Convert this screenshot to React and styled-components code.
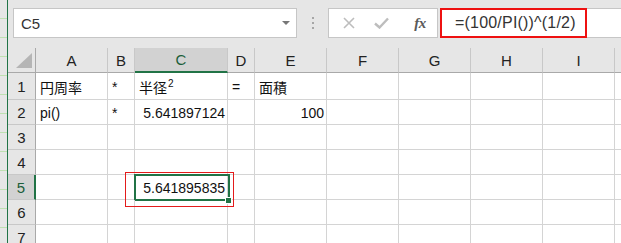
import React from 'react';
import styled, { createGlobalStyle } from 'styled-components';

const GlobalStyle = createGlobalStyle`
  html, body {
    margin: 0;
    padding: 0;
    background: #fff;
    overflow: hidden;
  }
  body {
    font-family: "Liberation Sans", "Noto Sans CJK JP", sans-serif;
  }
`;

const COLS = '28px 72px 27px 93px 27px 72px 72px 72px 72px 72px 72px';
const GREEN = '#217346';

const Window = styled.div`
  display: flex;
  width: 621px;
  height: 243px;
  overflow: hidden;
`;

const EdgeStrip = styled.div`
  flex: none;
  width: 7px;
  background: repeating-linear-gradient(
      to bottom,
      transparent 0 18px,
      #bfe0b2 18px 19px
    ),
    #e6e6e6;
  border-right: 1px solid ${GREEN};
`;

const Main = styled.div`
  flex: 1;
  min-width: 0;
  display: flex;
  flex-direction: column;
`;

const Toolbar = styled.div`
  flex: none;
  height: 48px;
  box-sizing: border-box;
  padding: 8px 0 0 5px;
  background: #e6e6e6;
  display: flex;
  align-items: flex-start;
`;

const NameBox = styled.div`
  width: 284px;
  height: 30px;
  box-sizing: border-box;
  background: #fff;
  border: 1px solid #c6c6c6;
  display: flex;
  align-items: center;
  justify-content: space-between;
  padding: 0 6px 0 7px;
  font-size: 15px;
  color: #333;
`;

const DropArrow = styled.span`
  width: 0;
  height: 0;
  border-left: 4px solid transparent;
  border-right: 4px solid transparent;
  border-top: 4px solid #777;
`;

const Grip = styled.div`
  width: 31px;
  height: 30px;
  display: flex;
  flex-direction: column;
  align-items: center;
  justify-content: center;
  gap: 3px;
`;

const GripDot = styled.span`
  width: 2px;
  height: 2px;
  background: #a6a6a6;
`;

const ButtonBox = styled.div`
  width: 110px;
  height: 30px;
  box-sizing: border-box;
  background: #fff;
  border: 1px solid #c6c6c6;
  display: flex;
  align-items: center;
`;

const IconSlot = styled.span`
  display: flex;
  align-items: center;
  justify-content: center;
  margin-left: ${({ $ml }) => $ml}px;
  width: ${({ $w }) => $w}px;
  color: ${({ $active }) => ($active ? '#555' : '#bdbdbd')};
`;

const Fx = styled.span`
  font-family: "Liberation Serif", "DejaVu Serif", serif;
  font-style: italic;
  font-weight: bold;
  font-size: 15px;
  letter-spacing: -0.5px;
  color: #5a5a5a;
`;

const FormulaBox = styled.div`
  flex: 1;
  height: 30px;
  box-sizing: border-box;
  margin-left: 2px;
  background: #fff;
  border: 1px solid #c6c6c6;
  border-right: none;
  display: flex;
  align-items: flex-start;
`;

const FormulaMark = styled.div`
  width: 147px;
  height: 30px;
  box-sizing: border-box;
  margin: -1px 0 0 -1px;
  border: 2px solid #ee1111;
  padding-left: 13px;
  display: flex;
  align-items: center;
  font-size: 16px;
  letter-spacing: 0.2px;
  color: #333;
`;

const Sheet = styled.div`
  flex: 1;
  display: flex;
  flex-direction: column;
`;

const Row = styled.div`
  display: grid;
  grid-template-columns: ${COLS};
  height: ${({ $h }) => $h}px;
  flex: none;
`;

const ColHead = styled.div`
  box-sizing: border-box;
  background: ${({ $sel }) => ($sel ? '#d2d2d2' : '#e6e6e6')};
  border-right: 1px solid #c8c8c8;
  border-bottom: ${({ $sel }) => ($sel ? `2px solid ${GREEN}` : '1px solid #a9a9a9')};
  display: flex;
  align-items: center;
  justify-content: center;
  font-size: 15px;
  color: ${({ $sel }) => ($sel ? '#1c5e3a' : '#222')};
`;

const Corner = styled.div`
  box-sizing: border-box;
  background: #e6e6e6;
  border-right: 1px solid #a9a9a9;
  border-bottom: 1px solid #a9a9a9;
  display: flex;
  align-items: flex-end;
  justify-content: flex-end;
  padding: 0 3px 4px 0;
`;

const RowHead = styled.div`
  box-sizing: border-box;
  background: ${({ $sel }) => ($sel ? '#d2d2d2' : '#e6e6e6')};
  border-right: ${({ $sel }) => ($sel ? `2px solid ${GREEN}` : '1px solid #a9a9a9')};
  border-bottom: 1px solid #c8c8c8;
  display: flex;
  align-items: center;
  justify-content: center;
  padding-top: 1px;
  font-size: 15px;
  color: ${({ $sel }) => ($sel ? '#1c5e3a' : '#222')};
`;

const Cell = styled.div`
  position: relative;
  box-sizing: border-box;
  border-right: 1px solid #d4d4d4;
  border-bottom: 1px solid #d4d4d4;
  display: flex;
  align-items: center;
  justify-content: ${({ $right }) => ($right ? 'flex-end' : 'flex-start')};
  padding: 1px 2px 0 4px;
  font-size: 14px;
  color: #111;
  white-space: nowrap;

  ${({ $sel }) =>
    $sel &&
    `
    &::after {
      content: '';
      position: absolute;
      top: -1px;
      left: -1px;
      right: -3px;
      bottom: -2px;
      border: 2px solid ${GREEN};
      pointer-events: none;
    }
  `}
`;

const Sup = styled.sup`
  font-size: 10px;
  line-height: 0;
  margin-left: 1px;
  position: relative;
  top: -3px;
`;

const FillHandle = styled.span`
  position: absolute;
  right: -5px;
  bottom: -5px;
  width: 5px;
  height: 5px;
  background: ${GREEN};
  border: 1px solid #fff;
  z-index: 2;
`;

const RedMark = styled.span`
  position: absolute;
  left: -10px;
  top: -3px;
  width: 109px;
  height: 35px;
  box-sizing: border-box;
  border: 1px solid #e31b1b;
  z-index: 3;
  pointer-events: none;
`;

const letters = ['A', 'B', 'C', 'D', 'E', 'F', 'G', 'H', 'I', ''];

const rows = [
  {
    n: 1,
    h: 27,
    cells: [
      '円周率',
      '*',
      <>
        半径<Sup>2</Sup>
      </>,
      '=',
      '面積',
    ],
  },
  { n: 2, h: 25, cells: ['pi()', '*', { v: '5.641897124', right: true }, '', { v: '100', right: true }] },
  { n: 3, h: 25, cells: [] },
  { n: 4, h: 25, cells: [] },
  { n: 5, h: 25, cells: ['', '', { v: '5.641895835', right: true, sel: true }] },
  { n: 6, h: 25, cells: [] },
  { n: 7, h: 25, cells: [] },
];

const CrossIcon = () => (
  <svg width="12" height="12" viewBox="0 0 12 12">
    <path d="M1 1 L11 11 M11 1 L1 11" stroke="currentColor" strokeWidth="1.6" fill="none" />
  </svg>
);

const CheckIcon = () => (
  <svg width="15" height="12" viewBox="0 0 15 12">
    <path d="M1 6.5 L5.5 10.5 L14 1.5" stroke="currentColor" strokeWidth="2.4" fill="none" />
  </svg>
);

const CornerTriangle = () => (
  <svg width="16" height="15" viewBox="0 0 16 15">
    <polygon points="16,0 16,15 0,15" fill="#b5b5b5" />
  </svg>
);

export default function App() {
  return (
    <>
      <GlobalStyle />
      <Window>
        <EdgeStrip />
        <Main>
          <Toolbar>
            <NameBox>
              <span>C5</span>
              <DropArrow />
            </NameBox>
            <Grip>
              <GripDot />
              <GripDot />
              <GripDot />
            </Grip>
            <ButtonBox>
              <IconSlot $ml={13} $w={14}>
                <CrossIcon />
              </IconSlot>
              <IconSlot $ml={16} $w={18}>
                <CheckIcon />
              </IconSlot>
              <IconSlot $ml={21} $w={18} $active>
                <Fx>fx</Fx>
              </IconSlot>
            </ButtonBox>
            <FormulaBox>
              <FormulaMark>=(100/PI())^(1/2)</FormulaMark>
            </FormulaBox>
          </Toolbar>
          <Sheet>
            <Row $h={25}>
              <Corner>
                <CornerTriangle />
              </Corner>
              {letters.map((l, i) => (
                <ColHead key={i} $sel={l === 'C'}>
                  {l}
                </ColHead>
              ))}
            </Row>
            {rows.map((r) => (
              <Row key={r.n} $h={r.h}>
                <RowHead $sel={r.n === 5}>{r.n}</RowHead>
                {letters.map((l, i) => {
                  const c = r.cells[i];
                  const obj = c && typeof c === 'object' && 'v' in c ? c : null;
                  return (
                    <Cell key={i} $right={obj?.right} $sel={obj?.sel}>
                      {obj ? obj.v : c}
                      {obj?.sel && (
                        <>
                          <FillHandle />
                          <RedMark />
                        </>
                      )}
                    </Cell>
                  );
                })}
              </Row>
            ))}
          </Sheet>
        </Main>
      </Window>
    </>
  );
}
